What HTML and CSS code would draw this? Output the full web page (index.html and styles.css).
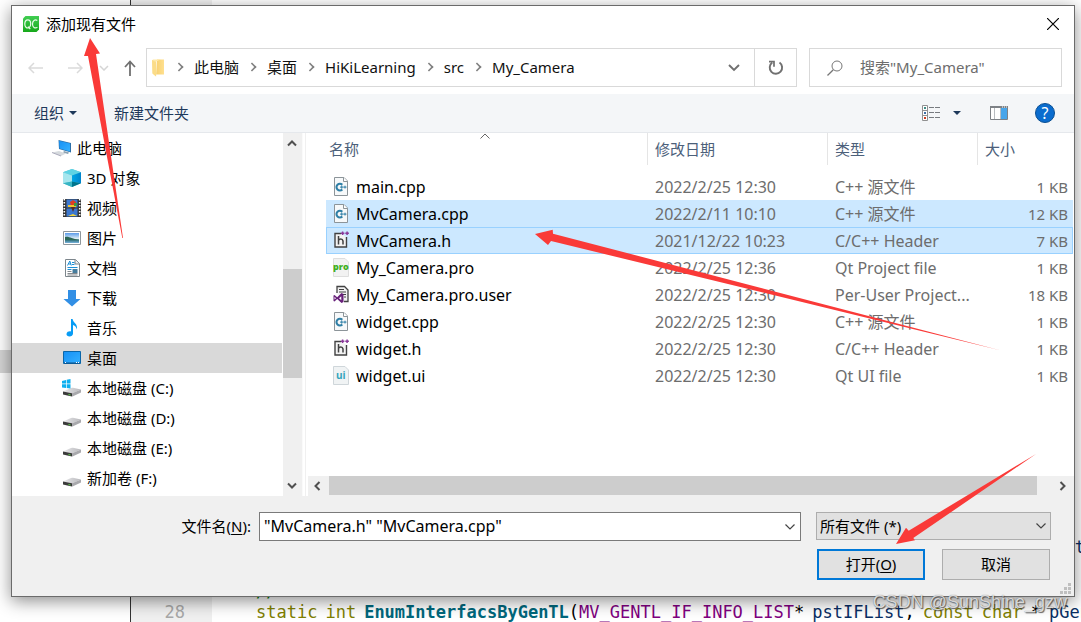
FILE: index.html
```
<!DOCTYPE html>
<html lang="zh-CN">
<head>
<meta charset="utf-8">
<title>添加现有文件</title>
<link rel="stylesheet" href="styles.css">
</head>
<body>
<svg class="defs" width="0" height="0" aria-hidden="true">
  <defs>
    <linearGradient id="gDrive" x1="0" y1="0" x2="1" y2="0"><stop offset="0" stop-color="#e8e8ea"/><stop offset="1" stop-color="#b9b9bd"/></linearGradient>
    <linearGradient id="gBlue" x1="0" y1="0" x2="1" y2="1"><stop offset="0" stop-color="#1690f5"/><stop offset="1" stop-color="#35b1ff"/></linearGradient>
    <linearGradient id="gCube" x1="0" y1="0" x2="1" y2="0"><stop offset="0" stop-color="#00a6e6"/><stop offset="1" stop-color="#0084cc"/></linearGradient>
    <linearGradient id="gSky" x1="0" y1="0" x2="0" y2="1"><stop offset="0" stop-color="#5a9bea"/><stop offset=".55" stop-color="#dcecf5"/><stop offset=".7" stop-color="#2e6f74"/><stop offset="1" stop-color="#7ab4e0"/></linearGradient>
    <linearGradient id="gQc" x1="0" y1="0" x2="0" y2="1"><stop offset="0" stop-color="#41cd52"/><stop offset="1" stop-color="#17a81a"/></linearGradient>
    <linearGradient id="gFold" x1="0" y1="0" x2="1" y2="0"><stop offset="0" stop-color="#f7d071"/><stop offset="1" stop-color="#ffe08f"/></linearGradient>
    <symbol id="drive" viewBox="0 0 20 20"><path d="M1 13.500l8-3.500q1-.5 2-.3l8 1.800-9 3.800z" fill="url(#gDrive)"/><path d="M1 13.500l9 1.800v3.200q-5-.8-9-2z" fill="#3b3b3b"/><path d="M10 15.300l9-3.800v3L10.500 18.500H10z" fill="#a9a9ad"/><path d="M6.500 16l2 .5v1l-2-.5z" fill="#5ee04a"/></symbol>
    <symbol id="cpp" viewBox="0 0 16 19"><path d="M1.500.5H11l3.500 3.500v14.500h-13z" fill="#f7f9fa" stroke="#8c9499"/><path d="M10.500.5v4h4" fill="#fff" stroke="#8c9499"/><path d="M9.300 7.700A3.400 3.400 0 1 0 9.300 12.500" fill="none" stroke="#2f7fa6" stroke-width="2.100"/><path d="M7 10.100h3.500M8.750 8.500v3.200M10.500 10.100h3M12 8.700v2.800" stroke="#2f7fa6" stroke-width="1"/></symbol>
    <symbol id="hdr" viewBox="0 0 16 19"><path d="M8 2.500H2v13.500h11.500V6" fill="#f3f3f3" stroke="#424242" stroke-width="1.400"/><path d="M5.500 5v8.500M5.500 9.500q.5-1.500 2.300-1.500t2.200 2v3.500" fill="none" stroke="#424242" stroke-width="1.500"/><path d="M7.800 2.200h3.600M9.600.4v3.600M12.300 2.200h3.600M14.100.4v3.600" stroke="#8a3a9a" stroke-width="1.500"/></symbol>
  </defs>
</svg>

<div class="editor" aria-hidden="true">
  <div class="tree-row"></div>
  <div class="line"><span class="num"></span><code class="far ident">t</code></div>
  <div class="line"></div>
  <div class="line"><span class="num"></span><code class="comment">//</code></div>
  <div class="line last"><span class="num">28</span><code class="tokens"><span class="kw">static</span><span class="kw">int</span><span><b class="fn">EnumInterfacsByGenTL</b>(<span class="type">MV_GENTL_IF_INFO_LIST</span>*</span><span><span class="ident">pstIFList</span>,</span><span class="kw">const</span><span class="kw">char</span><span>*</span><span class="ident">pGen</span></code></div>
</div>

<main class="desk">
<section class="dialog" role="dialog" aria-labelledby="dlg-title">
  <header class="titlebar">
    <svg width="16" height="16" viewBox="0 0 16 16"><path d="M2.500 0H16v13.500L13.500 16H0V2.500z" fill="url(#gQc)"/><path d="M6.600 11.600c-3.300 1.300-4.800-1-4.800-3.600 0-3 1.500-4.200 3-4.200 1.800 0 2.900 1.400 2.900 4 0 1.800-.4 3-1.500 3.800M5 10.600l2.300 2.600M14.300 4.600c-2.300-1.600-4.800 0-4.800 3.300 0 3.500 2.400 4.900 4.900 3.400" fill="none" stroke="#e9fbe9" stroke-width="1.200"/></svg>
    <h1 id="dlg-title">添加现有文件</h1>
    <button class="close" aria-label="关闭"><svg width="12" height="12" viewBox="0 0 12 12"><path d="M0 0l12 12M12 0L0 12" stroke="#000" stroke-width="1.200"/></svg></button>
  </header>

  <nav class="navbar">
    <div class="history">
      <button aria-label="后退"><svg width="16" height="12" viewBox="0 0 16 12"><path d="M15 6H1M6 1L1 6l5 5" fill="none" stroke="#dadada" stroke-width="1.500"/></svg></button>
      <button aria-label="前进"><svg width="16" height="12" viewBox="0 0 16 12"><path d="M1 6h14M10 1l5 5-5 5" fill="none" stroke="#dadada" stroke-width="1.500"/></svg></button>
      <button class="recent" aria-label="最近"><svg width="10" height="6" viewBox="0 0 10 6"><path d="M1 1l4 4 4-4" fill="none" stroke="#d5d5d5" stroke-width="1.500"/></svg></button>
      <button class="up" aria-label="向上"><svg width="12" height="16" viewBox="0 0 12 16"><path d="M6 16V2M1 7l5-5.500L11 7" fill="none" stroke="#707070" stroke-width="1.800"/></svg></button>
    </div>
    <div class="address">
      <svg width="13" height="18" viewBox="0 0 13 18"><path d="M5 .5h7v15H4z" fill="url(#gFold)"/><path d="M0 1.500L1 .5h7.500L4.200 2.500v15L.5 14.500z" fill="#ffe9a8"/><path d="M0 1l4 2v14.500l-3.500-3z" fill="#fbdc88"/></svg>
      <ol class="crumbs">
        <li><a href="#">此电脑</a></li><li><a href="#">桌面</a></li><li><a href="#">HiKiLearning</a></li><li><a href="#">src</a></li><li><a href="#">My_Camera</a></li>
      </ol>
      <button class="drop" aria-label="展开"><svg width="12" height="8" viewBox="0 0 12 8"><path d="M1 1l5 5 5-5" fill="none" stroke="#707070" stroke-width="1.900"/></svg></button>
      <button class="refresh" aria-label="刷新"><svg width="16" height="16" viewBox="0 0 16 16"><path d="M4.200 2.600A6.200 6.200 0 1 0 11.500 2.500" fill="none" stroke="#707070" stroke-width="1.900"/><path d="M1 1.700h5v5" fill="none" stroke="#707070" stroke-width="1.700"/></svg></button>
    </div>
    <label class="search">
      <svg width="16" height="16" viewBox="0 0 16 16"><circle cx="10" cy="6" r="5" fill="none" stroke="#767676"/><path d="M6.300 9.700L.5 15.500" stroke="#767676" stroke-width="1.300"/></svg>
      <input type="text" placeholder='搜索"My_Camera"' aria-label="搜索">
    </label>
  </nav>

  <div class="toolbar">
    <button>组织 <svg width="8" height="4" viewBox="0 0 8 4"><path d="M0 0h8L4 4z" fill="#1e395b"/></svg></button>
    <button class="new">新建文件夹</button>
    <button class="view" aria-label="更改视图"><svg width="18" height="16" viewBox="0 0 18 16"><path d="M.5.5h5v15h-5zM.5 5.500h5M.5 10.500h5" fill="#fff" stroke="#909090"/><path d="M2 2h2v2H2z" fill="#3e8c86"/><path d="M2 7h2v2H2z" fill="#3e6fa8"/><path d="M2 12h2v2H2z" fill="#cc3c1e"/><path d="M7 2.500h5M13 2.500h5M7 7.500h5M13 7.500h5M7 12.500h5M13 12.500h5" stroke="#777b80"/></svg></button>
    <button class="viewmenu" aria-label="更多选项"><svg width="8" height="4" viewBox="0 0 8 4"><path d="M0 0h8L4 4z" fill="#1e395b"/></svg></button>
    <button class="pane" aria-label="预览窗格"><svg width="18" height="14" viewBox="0 0 18 14"><path d="M.5.5h17v13H.5z" fill="#fff" stroke="#7d8186"/><path d="M0 0h18v2H0z" fill="#7d8186"/><path d="M11 2h6v11h-6z" fill="#47a5ea"/><path d="M4.500 2v11M10.500 2v11" stroke="#b8bcc0"/><path d="M12 1h1M14 1h1M16 1h1" stroke="#fff"/></svg></button>
    <button class="help" aria-label="帮助">?</button>
  </div>

  <div class="body">
    <ul class="tree">
      <li class="root"><svg width="20" height="20" viewBox="0 0 20 20"><path d="M6.500 2l12.500 3v9.500L7 11z" fill="#2b6fa8"/><path d="M7 2.800l11 2.700v8L7.600 10.500z" fill="url(#gBlue)"/><path d="M12 13l5 1.500-1 1.500-5-1.500z" fill="#8aa0b0"/><path d="M0 14.500l7-1.500 7 2.500-5 2.500z" fill="#d6dade"/><path d="M0 14.500l9 3.500" stroke="#aab"/></svg>此电脑</li>
      <li><svg width="20" height="20" viewBox="0 0 20 20"><path d="M10 1l9 3.300v11L10 19l-9-3.700v-11z" fill="#4fc3d0"/><path d="M10 1l9 3.300L10 7.500 1 4.300z" fill="#5fd3e4"/><path d="M1 4.300l9 3.200v6L1 15.300z" fill="#a6e6ee"/><path d="M10 7.500l9-3.200v11l-9-1.800z" fill="url(#gCube)"/><path d="M1 15.300l9-1.800V19z" fill="#38b5c4"/><path d="M10 13.500l9 1.800L10 19z" fill="#00758c"/></svg>3D 对象</li>
      <li><svg width="20" height="20" viewBox="0 0 20 20"><path d="M1 1h18v18H1z" fill="#333"/><path d="M4.500 1.500h11v8h-11zM4.500 10.500h11v8h-11z" fill="#3d78cf"/><path d="M2.300 1v18M17.700 1v18" stroke="#fff" stroke-width="1.600" stroke-dasharray="1.500 1.500"/><path d="M8 4l3-2 3 2-1 4H9z" fill="#df3c22"/><path d="M6 7h8v2H6z" fill="#efc52f"/><path d="M9 9h4l-2 5z" fill="#5a2a22"/><path d="M6 18l5-2 4 2z" fill="#f4d63d"/><path d="M12 5h3v3h-3z" fill="#3a9a42"/></svg>视频</li>
      <li><svg width="20" height="20" viewBox="0 0 20 20"><path d="M1.500 3.500h17v13h-17z" fill="#fff" stroke="#8f979c"/><path d="M3 5h14v10H3z" fill="url(#gSky)"/><path d="M3 9c4-1 7 2 14 3H3z" fill="#2c6757"/></svg>图片</li>
      <li><svg width="20" height="20" viewBox="0 0 20 20"><path d="M3.500 1.500h10l4 4v13h-14z" fill="#fff" stroke="#7d868c"/><path d="M13 1.500V6h4.500" fill="#eee" stroke="#7d868c"/><path d="M5.500 7.500L7.800 3l1.500 4.500M6.500 6h2.500M10 4.500h2.500M10 6.500h2.500M5.500 9.500h10M5.500 11.500h4" fill="none" stroke="#1b8ed6"/><path d="M10.500 11h5v4h-5z" fill="#477d9d"/><path d="M5.500 13.500h4M5.500 15.500h10M5.500 17h10" stroke="#858a8e"/></svg>文档</li>
      <li><svg width="20" height="20" viewBox="0 0 20 20"><path d="M6 2h8v9h4.500L10 18.500 1.500 11H6z" fill="#318fe5"/></svg>下载</li>
      <li><svg width="20" height="20" viewBox="0 0 20 20"><path d="M9 1h1.600c.4 4 5.400 4.500 4.400 10.500-1-3-2.500-4-4-4.500v8.500c0 4-7 3.500-6.500.5.300-2.500 3-3 4.500-2.500z" fill="#079cf5"/></svg>音乐</li>
      <li class="selected"><svg width="20" height="20" viewBox="0 0 20 20"><path d="M1.500 3.500h17v12h-17z" fill="url(#gBlue)" stroke="#0b66a9"/><path d="M2 15h16" stroke="#0b4f86"/><path d="M3 14.500h1M14 14.500h1M16 14.500h1" stroke="#fff"/></svg>桌面</li>
      <li><svg width="20" height="20" viewBox="0 0 20 20"><use href="#drive"/><path d="M0 3l4-1v3.500H0zM4.700 1.800L8.500 1v4.500H4.700zM0 6.300h4V10l-4-.6zM4.700 6.300h3.800v4.200l-3.800-.6z" fill="#0fb0ef"/></svg>本地磁盘 (C:)</li>
      <li><svg width="20" height="20"><use href="#drive"/></svg>本地磁盘 (D:)</li>
      <li><svg width="20" height="20"><use href="#drive"/></svg>本地磁盘 (E:)</li>
      <li><svg width="20" height="20"><use href="#drive"/></svg>新加卷 (F:)</li>
    </ul>
    <div class="vscroll">
      <button aria-label="向上滚动"><svg width="10" height="8" viewBox="0 0 10 8"><path d="M1 6.500l4-4 4 4" fill="none" stroke="#505050" stroke-width="2"/></svg></button>
      <div class="track"><div class="thumb"></div></div>
      <button aria-label="向下滚动"><svg width="10" height="8" viewBox="0 0 10 8"><path d="M1 1.500l4 4 4-4" fill="none" stroke="#505050" stroke-width="2"/></svg></button>
    </div>
    <div class="files">
      <table>
        <colgroup><col><col class="c-date"><col class="c-type"><col class="c-size"></colgroup>
        <thead><tr>
          <th scope="col"><span class="name-head">名称</span><svg class="sort" width="10" height="6" viewBox="0 0 10 6"><path d="M.5 5.500l4.500-4.500 4.500 4.500" fill="none" stroke="#666"/></svg></th>
          <th scope="col"><span>修改日期</span></th><th scope="col"><span>类型</span></th><th scope="col"><span class="end">大小</span></th>
        </tr></thead>
        <tbody>
          <tr><td><svg width="16" height="19"><use href="#cpp"/></svg>main.cpp</td><td>2022/2/25 12:30</td><td>C++ 源文件</td><td>1 KB</td></tr>
          <tr class="sel"><td><svg width="16" height="19"><use href="#cpp"/></svg>MvCamera.cpp</td><td>2022/2/11 10:10</td><td>C++ 源文件</td><td>12 KB</td></tr>
          <tr class="sel focus"><td><svg width="16" height="19"><use href="#hdr"/></svg>MvCamera.h</td><td>2021/12/22 10:23</td><td>C/C++ Header</td><td>7 KB</td></tr>
          <tr><td><svg width="16" height="19" viewBox="0 0 16 19"><path d="M.5.500H12L15.500 4v14.500H.5z" fill="#f2f2f2" stroke="#dedede"/><text x="0" y="12" class="ico-pro">pro</text></svg>My_Camera.pro</td><td>2022/2/25 12:36</td><td>Qt Project file</td><td>1 KB</td></tr>
          <tr><td><svg width="16" height="19" viewBox="0 0 16 19"><path d="M4 8V1.500h7.500L15 5v11.500h-4" fill="#f3f3f3" stroke="#424242" stroke-width="1.300"/><path d="M6 4.500h5M6 7h7M9 9.500h4M11 12h2" stroke="#424242"/><path d="M8.500 8l2 1v8l-2 1-4.300-4L1.500 16.500.5 16v-5.500l1-.5 2.700 2.300zM8.300 11.300L6 13.200l2.300 2zM1.500 11.800v2.800L3 13.200z" fill="#68217a" fill-rule="evenodd"/></svg>My_Camera.pro.user</td><td>2022/2/25 12:30</td><td>Per-User Project...</td><td>18 KB</td></tr>
          <tr><td><svg width="16" height="19"><use href="#cpp"/></svg>widget.cpp</td><td>2022/2/25 12:30</td><td>C++ 源文件</td><td>1 KB</td></tr>
          <tr><td><svg width="16" height="19"><use href="#hdr"/></svg>widget.h</td><td>2022/2/25 12:30</td><td>C/C++ Header</td><td>1 KB</td></tr>
          <tr><td><svg width="16" height="19" viewBox="0 0 16 19"><path d="M.5.500H12L15.500 4v14.500H.5z" fill="#f0f3f4" stroke="#cfd6da"/><text x="3" y="13" class="ico-ui">ui</text></svg>widget.ui</td><td>2022/2/25 12:30</td><td>Qt UI file</td><td>1 KB</td></tr>
        </tbody>
      </table>
      <div class="hscroll">
        <button aria-label="向左滚动"><svg width="8" height="10" viewBox="0 0 8 10"><path d="M6.500 1l-4 4 4 4" fill="none" stroke="#505050" stroke-width="2"/></svg></button>
        <div class="thumb"></div>
        <button class="right" aria-label="向右滚动"><svg width="8" height="10" viewBox="0 0 8 10"><path d="M1.500 1l4 4-4 4" fill="none" stroke="#505050" stroke-width="2"/></svg></button>
      </div>
    </div>
  </div>

  <footer class="footer">
    <div class="fields">
      <label for="fname">文件名(<u>N</u>):</label>
      <div class="combo"><input id="fname" type="text" value='"MvCamera.h" "MvCamera.cpp"'><svg width="10" height="6" viewBox="0 0 10 6"><path d="M.5.500L5 5l4.500-4.500" fill="none" stroke="#444" stroke-width="1.200"/></svg></div>
      <div class="filter"><select aria-label="文件类型"><option>所有文件 (*)</option></select><svg width="10" height="6" viewBox="0 0 10 6"><path d="M.5.500L5 5l4.500-4.500" fill="none" stroke="#444" stroke-width="1.200"/></svg></div>
    </div>
    <div class="actions">
      <button class="primary">打开(<u>O</u>)</button>
      <button>取消</button>
    </div>
    <svg class="grip" width="11" height="11" viewBox="0 0 11 11"><path d="M8 0h3v3H8zM4 4h3v3H4zM8 4h3v3H8zM0 8h3v3H0zM4 8h3v3H4zM8 8h3v3H8z" fill="#bfbfbf"/></svg>
  </footer>
</section>
</main>

<svg class="arrows" viewBox="0 0 1081 622" preserveAspectRatio="none" aria-hidden="true">
  <path d="M90 38L100 53.500 96 54 123 238 122.300 238 88 56 84 56z"/>
  <path d="M535 234L552.700 229.700 553 233.700 999 350 551 241 548 245z"/>
  <path d="M896 544L906 527.700 908.700 530.700 1036 454 913.300 538 915 540.300z"/>
</svg>
<div class="watermark">CSDN @SunShine_gzw</div>
</body>
</html>
```
FILE: styles.css
```
* { box-sizing: border-box; }
body {
  margin: 0;
  min-height: 100vh;
  position: relative;
  overflow: hidden;
  background: #fff;
  color: #000;
  font: 15px/20px "Noto Sans", "Noto Sans CJK SC", sans-serif;
}
button, input, select { font: inherit; color: inherit; border: 0; padding: 0; margin: 0; background: none; }
svg { display: block; flex: none; }
.defs { position: absolute; }
h1, ul, ol { margin: 0; padding: 0; font-size: 15px; font-weight: 400; list-style: none; }

/* code editor behind the dialog */
.editor {
  position: absolute;
  inset: 0;
  overflow: hidden;
  display: flex;
  flex-direction: column;
  justify-content: flex-end;
  background: linear-gradient(90deg, #fff 130px, #333 130px, #333 131px, #f0f0f0 131px, #f0f0f0 212px, #fff 212px);
  font: 17px/22px "DejaVu Sans Mono", "Liberation Mono", monospace;
}
.tree-row { width: 130px; height: 23px; margin-bottom: 163px; background: #d4d4d4; }
.line { display: flex; height: 22px; gap: 71px; white-space: pre; }
.line.last { height: 20px; line-height: 20px; }
.line code { font: inherit; }
.line .tokens { display: flex; gap: 8px; }
.num { width: 185px; flex: none; text-align: right; color: #a8a8a8; }
.far { margin-left: auto; margin-right: -4px; }
.kw { color: #808000; }
.fn { color: #00677c; }
.type { color: #800080; }
.ident { color: #092e64; }
.comment { color: #008000; }

.desk { min-height: 100vh; padding: 5px 6px 25px 11px; display: flex; }
.dialog {
  position: relative;
  flex: 1;
  min-width: 0;
  display: flex;
  flex-direction: column;
  background: #fff;
  border: 1px solid #6b6b6b;
  box-shadow: 0 4px 16px rgba(0, 0, 0, .45);
}

.titlebar { display: flex; align-items: center; gap: 7px; height: 36px; padding: 0 15px 0 11px; }
.close { margin-left: auto; }

.navbar { display: flex; align-items: center; padding: 6px 12px 7px 0; }
.history { display: flex; align-items: center; width: 134px; padding-left: 16px; }
.history button + button { margin-left: 23px; }
.history button.recent { margin-left: 16px; }
.history button.up { margin-left: 15px; }
.address { flex: 1; display: flex; align-items: center; height: 39px; padding-left: 5px; border: 1px solid #d9d9d9; }
.crumbs { display: flex; flex: 1; padding: 0 0 2px 1px; }
.crumbs li { display: flex; align-items: center; }
.crumbs li::before {
  content: "";
  width: 6px;
  height: 6px;
  margin: 0 11px 0 9px;
  border: solid #808080;
  border-width: 2px 2px 0 0;
  transform: rotate(45deg) scale(.8);
}
.crumbs a { color: #111; text-decoration: none; }
.drop { padding: 0 14px; }
.refresh { align-self: stretch; width: 42px; padding-left: 13px; border-left: 1px solid #d9d9d9; }
.search { display: flex; align-items: center; gap: 17px; width: 253px; height: 39px; margin-left: 12px; padding-left: 17px; border: 1px solid #d9d9d9; }
.search input { width: 180px; padding-bottom: 2px; outline: 0; }
.search input::placeholder { color: #6d6d6d; opacity: 1; }

.toolbar {
  display: flex;
  align-items: center;
  height: 39px;
  padding: 0 19px 0 22px;
  background: #f4f6f8;
  border-bottom: 1px solid #e5e8ec;
  color: #1e395b;
}
.toolbar button { display: flex; align-items: center; gap: 5px; }
.toolbar .new { margin-left: 37px; }
.toolbar .view { margin-left: auto; }
.toolbar .viewmenu { margin-left: 13px; }
.toolbar .pane { margin-left: 29px; }
.toolbar .help {
  justify-content: center;
  width: 20px;
  height: 20px;
  margin-left: 27px;
  border: 1px solid #0a4f93;
  border-radius: 50%;
  background: #0a6cce;
  color: #fff;
  font-size: 16px;
}

.body { flex: 1; display: flex; min-height: 0; }
.tree { width: 271px; }
.tree li { display: flex; align-items: center; gap: 5px; height: 30px; padding-left: 50px; margin-right: 1px; }
.tree .root { padding-left: 40px; }
.tree .selected { background: #d9d9d9; }
.vscroll { display: flex; flex-direction: column; width: 20px; background: #f0f0f0; border-right: 1px solid #fafafa; }
.vscroll button { height: 20px; padding-left: 4px; }
.vscroll .track { flex: 1; display: flex; flex-direction: column; padding: 116px 0 98px; }
.vscroll .thumb { flex: 1; background: #cdcdcd; }

.files { flex: 1; min-width: 0; margin-left: 2px; border-left: 1px solid #f0f0f0; display: flex; flex-direction: column; }
.files table { flex: none; width: calc(100% - 21px); margin: 0 1px 0 20px; border-collapse: collapse; table-layout: fixed; }
.c-date { width: 180px; }
.c-type { width: 150px; }
.c-size { width: 95px; }
th { position: relative; padding: 0; height: 40px; font-weight: 400; text-align: left; vertical-align: top; color: #4c607a; }
th span { display: block; height: 32px; padding: 6px 0 0 7px; border-right: 1px solid #e5e5e5; }
th .name-head { padding-left: 3px; }
th .end { border: 0; }
.sort { position: absolute; top: 0; left: 154px; }
td { height: 27px; padding: 0 5px 0 7px; color: #6d6d6d; font-size: 16px; white-space: nowrap; }
td:first-child { display: flex; align-items: center; gap: 7px; color: #000; }
td:last-child { font-size: 15px; text-align: right; }
.sel { background: #cce8ff; }
.focus { outline: 1px solid #99d1ff; outline-offset: -1px; }
.ico-pro { font: 800 9px "Open Sans", sans-serif; fill: #3faf1c; }
.ico-ui { font: 700 10px "Open Sans", sans-serif; fill: #35a5bd; }

.hscroll { display: flex; align-items: stretch; height: 20px; margin: auto 0 0 2px; padding-bottom: 1px; background: #f0f0f0; }
.hscroll button { width: 21px; padding-left: 5px; }
.hscroll .thumb { flex: 1; background: #cdcdcd; }
.hscroll .right { margin-left: 16px; padding-left: 6px; }

.footer { position: relative; padding: 16px 23px 16px 12px; background: #f0f0f0; }
.fields { display: flex; align-items: flex-start; }
.fields label { width: 235px; padding: 4px 8px 0 0; text-align: right; }
.combo { flex: 1; display: flex; align-items: center; height: 29px; padding: 0 5px 0 4px; border: 1px solid #7a7a7a; background: #fff; }
.combo input { flex: 1; min-width: 0; padding-bottom: 2px; outline: 0; font-size: 16px; }
.filter { position: relative; width: 235px; margin-left: 15px; }
.filter select { appearance: none; width: 100%; height: 28px; padding: 0 3px; border: 1px solid #adadad; background: #e1e1e1; }
.filter svg { position: absolute; right: 5px; top: 11px; pointer-events: none; }
.actions { display: flex; justify-content: flex-end; gap: 17px; margin-top: 8px; padding-right: 1px; }
.actions button { width: 108px; height: 31px; padding-bottom: 2px; border: 1px solid #adadad; background: #e1e1e1; }
.actions .primary { border: 2px solid #0078d7; }
u { text-underline-offset: 2px; }
.grip { position: absolute; right: 3px; bottom: 2px; }

.arrows { position: absolute; inset: 0; width: 100%; height: 100%; fill: #fa3a38; pointer-events: none; }
.watermark {
  position: absolute;
  right: 14px;
  bottom: 9px;
  color: rgba(255, 255, 255, .75);
  font: 18px/22px "Liberation Sans", sans-serif;
  text-shadow: 1px 1px 1px rgba(60, 60, 60, .8), 0 0 1px rgba(60, 60, 60, .7);
  pointer-events: none;
}
```
